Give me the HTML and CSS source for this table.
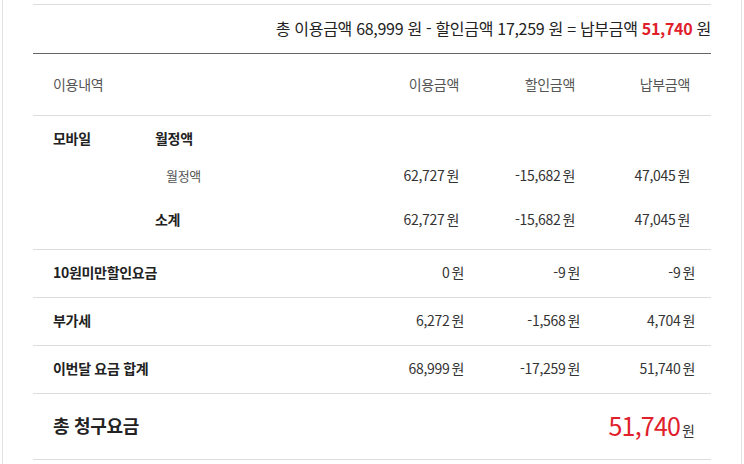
FILE: index.html
```html
<!DOCTYPE html>
<html lang="ko">
<head>
    <meta charset="UTF-8">
    <meta name="viewport" content="width=device-width, initial-scale=1.0">
    <title>요금 청구 내역</title>
    <link rel="stylesheet" href="styles.css">
</head>
<body>
    <div class="page">
        <div class="bill">
            <p class="summary">
                총 이용금액 68,999 원 - 할인금액 17,259 원 = 납부금액 <em>51,740</em> 원
            </p>

            <div class="row head">
                <span class="name">이용내역</span>
                <span class="amt">이용금액</span>
                <span class="amt">할인금액</span>
                <span class="amt">납부금액</span>
            </div>

            <div class="group">
                <div class="row sub first">
                    <span class="name"><b class="cat">모바일</b><b>월정액</b></span>
                </div>
                <div class="row sub item">
                    <span class="name">월정액</span>
                    <span class="amt">62,727<i>원</i></span>
                    <span class="amt">-15,682<i>원</i></span>
                    <span class="amt">47,045<i>원</i></span>
                </div>
                <div class="row sub last">
                    <span class="name"><b class="indent">소계</b></span>
                    <span class="amt">62,727<i>원</i></span>
                    <span class="amt">-15,682<i>원</i></span>
                    <span class="amt">47,045<i>원</i></span>
                </div>
            </div>

            <div class="row line">
                <span class="name"><b>10원미만할인요금</b></span>
                <span class="amt">0<i>원</i></span>
                <span class="amt">-9<i>원</i></span>
                <span class="amt">-9<i>원</i></span>
            </div>
            <div class="row line">
                <span class="name"><b>부가세</b></span>
                <span class="amt">6,272<i>원</i></span>
                <span class="amt">-1,568<i>원</i></span>
                <span class="amt">4,704<i>원</i></span>
            </div>
            <div class="row line">
                <span class="name"><b>이번달 요금 합계</b></span>
                <span class="amt">68,999<i>원</i></span>
                <span class="amt">-17,259<i>원</i></span>
                <span class="amt">51,740<i>원</i></span>
            </div>

            <div class="total">
                <span class="total-label">총 청구요금</span>
                <span class="total-value"><em>51,740</em><i>원</i></span>
            </div>
        </div>
    </div>
</body>
</html>
```

FILE: styles.css
```css
body {
    margin: 0;
    font-family: "Noto Sans CJK KR", "Noto Sans", sans-serif;
    color: #333;
    background: #fff;
}
.page {
    margin: 0 2px;
    height: 464px;
    box-sizing: border-box;
    border-left: 1px solid #e2e2e2;
    border-right: 1px solid #e2e2e2;
    padding: 4px 30px 0;
}
.bill {
    border-top: 1px solid #ddd;
}
.summary {
    margin: 0;
    height: 48px;
    line-height: 46px;
    text-align: right;
    font-size: 16px;
    letter-spacing: -0.3px;
    color: #222;
    border-bottom: 1px solid #666;
}
.summary em {
    font-style: normal;
    font-weight: bold;
    color: #e0202a;
}
.row {
    display: grid;
    grid-template-columns: 1fr 116px 116px 115px;
    align-items: center;
    box-sizing: border-box;
    padding: 0 16px 0 20px;
    font-size: 14px;
    letter-spacing: -0.3px;
}
.row .amt {
    text-align: right;
    color: #333;
}
.amt i,
.total-value i {
    font-style: normal;
    margin-left: 2px;
}
.row b {
    color: #222;
}
.head {
    height: 62px;
    padding-right: 21px;
    padding-bottom: 2px;
    border-bottom: 1px solid #ddd;
    color: #555;
}
.head .amt {
    color: #555;
}
.group {
    border-bottom: 1px solid #ddd;
    padding-bottom: 7px;
}
.sub {
    padding-right: 21px;
}
.sub.first {
    height: 43px;
}
.sub.item {
    height: 38px;
    padding-bottom: 6px;
}
.sub.item .name {
    padding-left: 113px;
    font-size: 13px;
    color: #555;
}
.sub.last {
    height: 45px;
    padding-bottom: 2px;
}
.cat {
    display: inline-block;
    width: 102px;
}
.indent {
    margin-left: 102px;
}
.line {
    height: 48px;
    padding-bottom: 3px;
    border-bottom: 1px solid #ddd;
}
.total {
    display: flex;
    justify-content: space-between;
    align-items: center;
    box-sizing: border-box;
    height: 66px;
    padding: 0 16px 3px 20px;
    border-bottom: 1px solid #ddd;
}
.total-label {
    font-size: 18px;
    font-weight: bold;
    color: #222;
    letter-spacing: -0.3px;
}
.total-value {
    font-size: 14px;
    color: #333;
}
.total-value em {
    font-style: normal;
    font-size: 25px;
    color: #e0202a;
    letter-spacing: -0.8px;
}
```
